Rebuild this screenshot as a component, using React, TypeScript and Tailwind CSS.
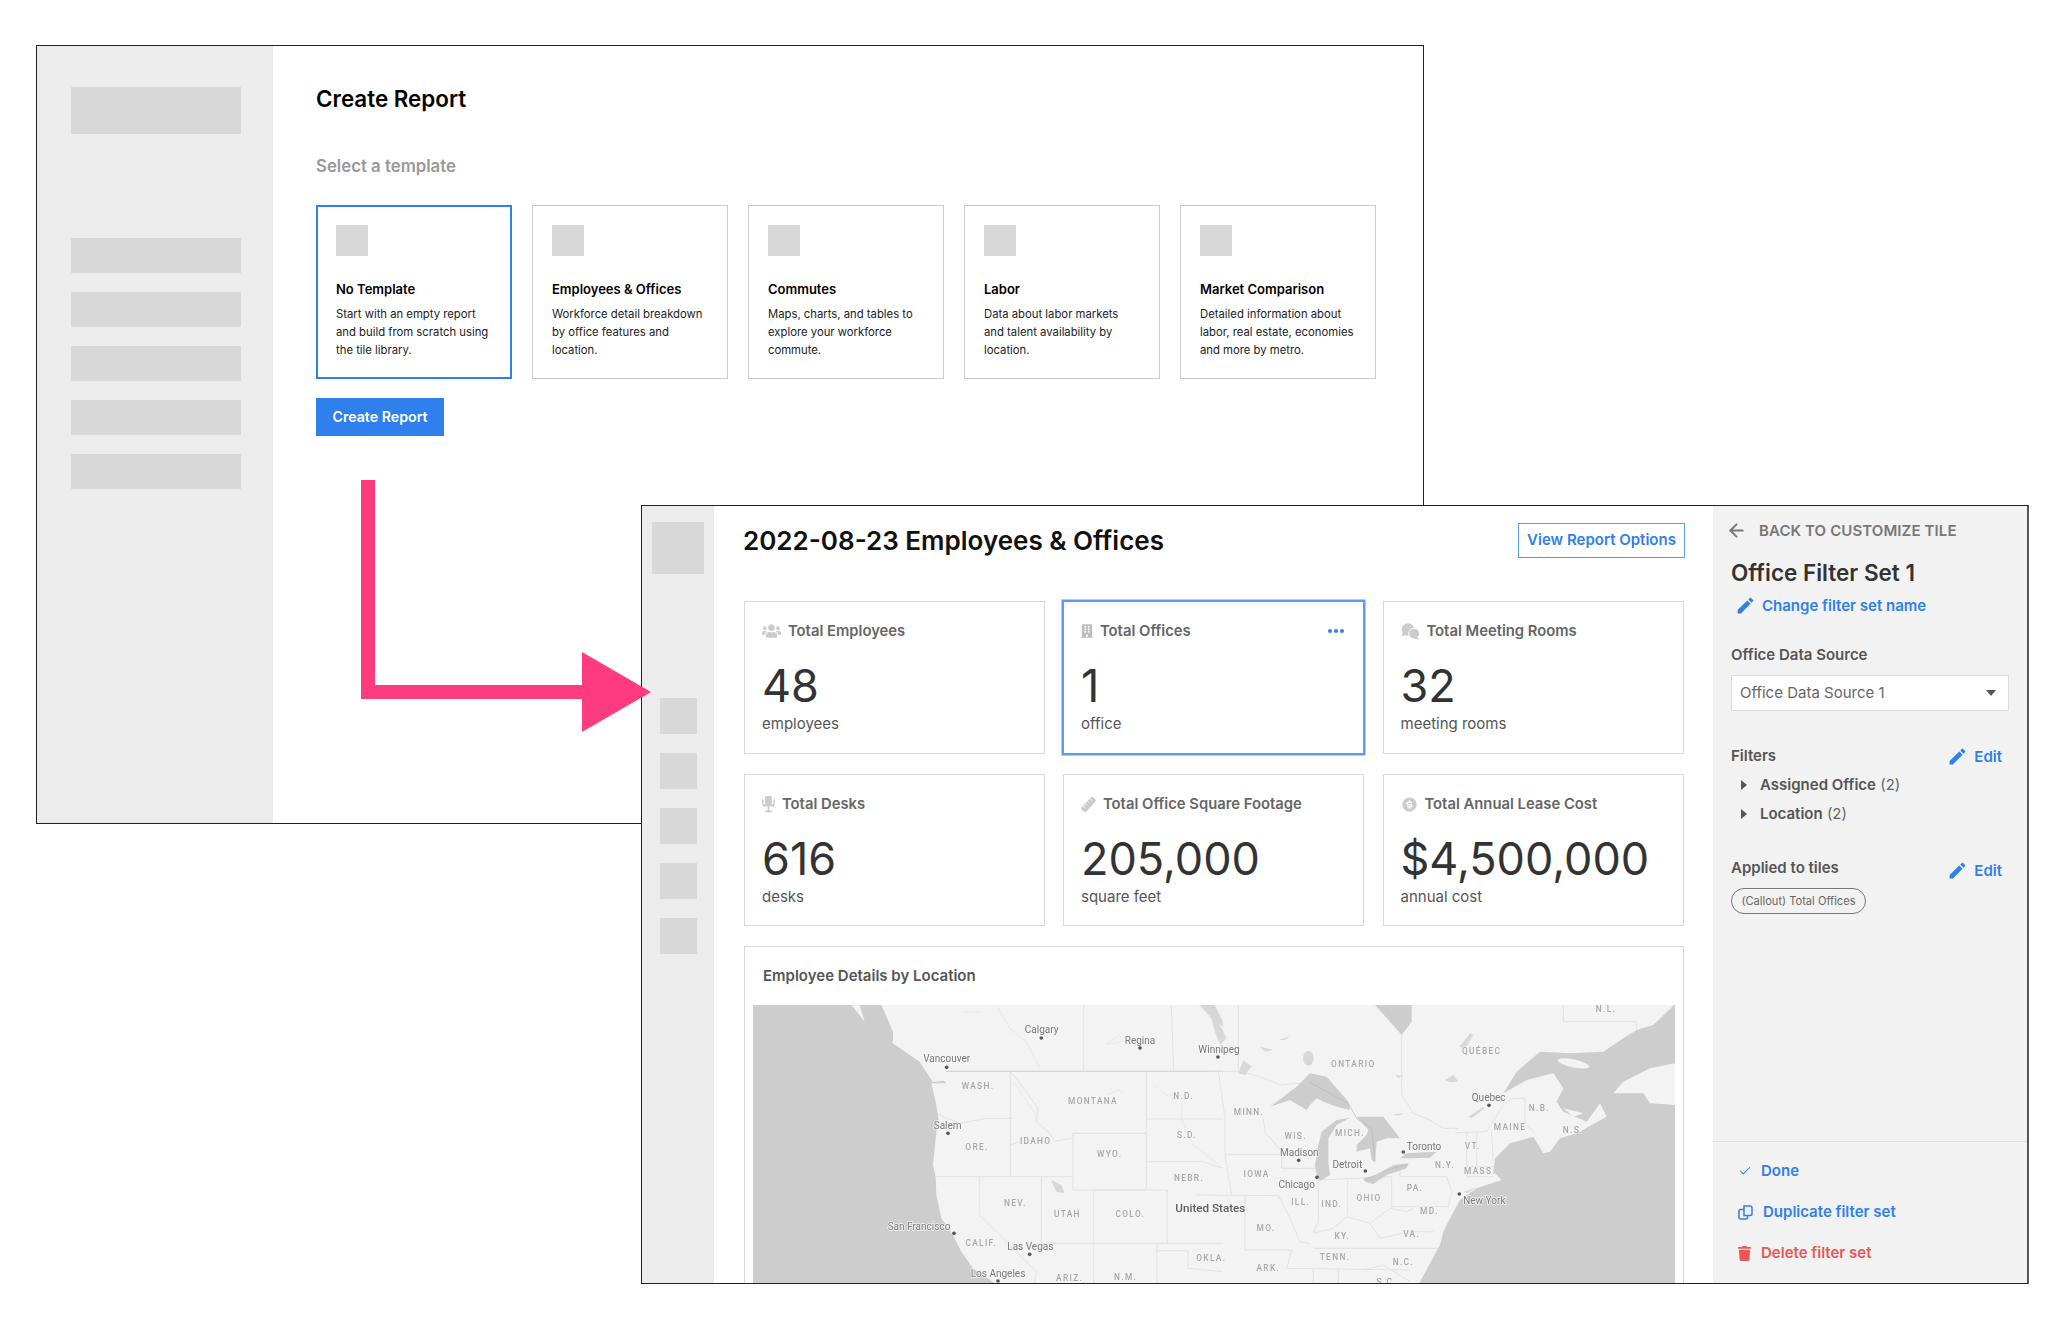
import { ArrowLeft, Check } from "lucide-react";
import { FaBuilding, FaTrash, FaUsers } from "react-icons/fa";
import { MdEdit } from "react-icons/md";
import { RiMoneyDollarCircleFill } from "react-icons/ri";
import type { ReactNode } from "react";

type Template = { title: string; lines: string[]; selected?: boolean };
type Tile = {
  title: string;
  value: string;
  unit: string;
  icon: ReactNode;
  selected?: boolean;
};
type Label = [string, number, number];

const templates: Template[] = [
  {
    title: "No Template",
    lines: ["Start with an empty report", "and build from scratch using", "the tile library."],
    selected: true,
  },
  {
    title: "Employees & Offices",
    lines: ["Workforce detail breakdown", "by office features and", "location."],
  },
  {
    title: "Commutes",
    lines: ["Maps, charts, and tables to", "explore your workforce", "commute."],
  },
  {
    title: "Labor",
    lines: ["Data about labor markets", "and talent availability by", "location."],
  },
  {
    title: "Market Comparison",
    lines: ["Detailed information about", "labor, real estate, economies", "and more by metro."],
  },
];

const DeskChair = () => (
  <svg viewBox="0 0 13 17" className="w-[13px] h-[17px] text-[#cccccc]" fill="currentColor">
    <rect x="3" y="0" width="7" height="8" rx="1.5" />
    <rect x="0" y="3" width="1.6" height="5" rx="0.8" />
    <rect x="11.4" y="3" width="1.6" height="5" rx="0.8" />
    <rect x="0.5" y="8" width="12" height="2.4" rx="1" />
    <rect x="5.6" y="10" width="1.8" height="5" />
    <rect x="3" y="14.6" width="7" height="1.6" rx="0.8" />
  </svg>
);

const RulerIcon = () => (
  <svg viewBox="0 0 16 16" className="w-[15px] h-[15px] text-[#cccccc]">
    <g transform="rotate(-48 8 8)">
      <rect x="-1" y="4.6" width="18" height="6.8" rx="1" fill="currentColor" />
      <path d="M3 4.6 V7.4 M6.5 4.6 V7.4 M10 4.6 V7.4 M13.5 4.6 V7.4" stroke="#ffffff" strokeWidth="0.9" />
    </g>
  </svg>
);

const BubblesIcon = () => (
  <svg viewBox="0 0 19 17" className="w-[19px] h-[17px] text-[#cccccc]" fill="currentColor">
    <circle cx="7" cy="6.5" r="6.2" />
    <path d="M2 9 L0.5 13 L6 12 Z" />
    <circle cx="13.2" cy="10.6" r="5.4" stroke="#ffffff" strokeWidth="1" />
    <path d="M16 14 L18.5 16.8 L12.5 15.8 Z" />
  </svg>
);

const tiles: Tile[] = [
  {
    title: "Total Employees",
    value: "48",
    unit: "employees",
    icon: <FaUsers className="w-[19px] h-[16px] text-[#cccccc]" />,
  },
  {
    title: "Total Offices",
    value: "1",
    unit: "office",
    icon: <FaBuilding className="w-[12px] h-[16px] text-[#bdbdbd]" />,
    selected: true,
  },
  {
    title: "Total Meeting Rooms",
    value: "32",
    unit: "meeting rooms",
    icon: <BubblesIcon />,
  },
  {
    title: "Total Desks",
    value: "616",
    unit: "desks",
    icon: <DeskChair />,
  },
  {
    title: "Total Office Square Footage",
    value: "205,000",
    unit: "square feet",
    icon: <RulerIcon />,
  },
  {
    title: "Total Annual Lease Cost",
    value: "$4,500,000",
    unit: "annual cost",
    icon: <RiMoneyDollarCircleFill className="w-[17px] h-[17px] text-[#cccccc]" />,
  },
];

// map coordinates are three times the page pixels, east half is shifted by 1371
const westLines = [
  "580,199 1410,199",
  "992,0 992,199",
  "1255,0 1262,199",
  "772,199 772,515",
  "555,328 620,355 700,340 780,340",
  "545,515 960,515",
  "772,199 805,240 855,310 850,350 890,385 905,408 960,400",
  "800,410 772,420",
  "960,385 1180,385 1180,555 960,555 960,385",
  "1180,199 1180,385",
  "1180,342 1410,342",
  "1180,470 1350,470 1410,490",
  "1022,555 1243,555 1243,715",
  "1022,555 1022,834",
  "865,515 865,715",
  "680,515 680,630 850,800 845,834",
  "865,715 1410,715",
  "1212,715 1212,834",
  "1212,737 1305,737 1305,790 1410,800",
];
const eastLines = [
  "85,0 85,199 0,199",
  "85,199 150,215 210,240 300,232",
  "25,199 45,340 45,450 65,570",
  "45,448 215,448 215,490 320,490",
  "160,340 165,380 215,440 215,490",
  "-40,570 205,572 240,640 270,710 300,715",
  "105,572 105,735",
  "105,735 245,735 230,790",
  "325,525 325,650 310,685",
  "413,525 413,630",
  "325,525 545,515 545,605",
  "570,490 570,515 710,515 725,560 715,605 545,605",
  "575,90 575,270 610,325 660,345 700,370 745,370",
  "770,385 770,515",
  "735,383 830,380 880,300 905,280 945,280 945,355 970,380",
  "800,385 800,485",
  "845,380 850,470",
  "770,485 850,485",
  "770,515 850,515",
  "1060,0 1060,50 1280,50 1280,80",
  "310,685 370,670 410,635 480,655 540,610 590,620 610,610",
  "480,655 510,700 600,680 670,680",
  "310,730 690,730",
  "230,790 600,795",
  "310,795 310,834",
  "385,795 385,834",
  "460,795 520,780 600,830",
];
const rivers = [
  "1205,240 1240,270 1290,270 1285,340 1320,420 1400,480",
  "1060,118 1100,90 1110,110 1060,118",
  "780,230 850,330 850,350",
  "630,20 680,22",
  "730,0 770,70 820,110 860,190",
  "1060,270 1100,255 1110,265",
];
const cityLabels: Label[] = [
  ["Calgary", 866, 74],
  ["Regina", 1161, 105],
  ["Vancouver", 581, 161],
  ["Salem", 584, 362],
  ["San Francisco", 498, 665],
  ["Las Vegas", 832, 723],
  ["Los Angeles", 735, 804],
  ["Winnipeg", 1398, 132],
  ["Madison", 1639, 443],
  ["Toronto", 2013, 423],
  ["Detroit", 1783, 479],
  ["Chicago", 1631, 539],
  ["Quebec", 2207, 276],
  ["New York", 2194, 586],
];
const cityDots = [
  [865, 99],
  [1161, 129],
  [1395, 156],
  [581, 187],
  [585, 385],
  [603, 685],
  [830, 748],
  [735, 828],
  [1637, 466],
  [1951, 441],
  [1837, 498],
  [1692, 517],
  [2208, 301],
  [2119, 567],
];
const regionLabels: Label[] = [
  ["WASH.", 675, 244],
  ["MONTANA", 1020, 289],
  ["N.D.", 1292, 272],
  ["S.D.", 1302, 389],
  ["ORE.", 672, 425],
  ["IDAHO", 848, 409],
  ["WYO.", 1070, 446],
  ["NEBR.", 1308, 518],
  ["NEV.", 787, 593],
  ["UTAH", 943, 626],
  ["COLO.", 1132, 628],
  ["CALIF.", 685, 713],
  ["ARIZ.", 950, 820],
  ["N.M.", 1118, 816],
  ["OKLA.", 1375, 758],
  ["MINN.", 1488, 322],
  ["WIS.", 1628, 394],
  ["IOWA", 1511, 508],
  ["ILL.", 1643, 590],
  ["IND.", 1736, 598],
  ["OHIO", 1848, 578],
  ["MICH.", 1791, 385],
  ["ONTARIO", 1801, 177],
  ["QUÉBEC", 2186, 137],
  ["N.L.", 2559, 13],
  ["N.B.", 2359, 310],
  ["N.S.", 2461, 375],
  ["MAINE", 2271, 365],
  ["VT.", 2159, 424],
  ["MASS.", 2181, 498],
  ["N.Y.", 2076, 480],
  ["PA.", 1986, 550],
  ["MD.", 2029, 617],
  ["VA.", 1976, 688],
  ["MO.", 1539, 668],
  ["KY.", 1768, 694],
  ["TENN.", 1746, 755],
  ["ARK.", 1546, 789],
  ["N.C.", 1951, 772],
  ["S.C.", 1901, 832],
];

const MapView = () => (
  <svg viewBox="0 0 2766 834" className="block w-[922px] h-[278px] blur-[0.4px]">
    <rect width="2766" height="834" fill="#f3f3f3" />
    <path
      d="M0,0 L385,0 L420,80 L420,112 L500,160 L535,190 L580,235 L535,235 L550,300 L556,340 L548,400 L540,480 L548,515 L550,570 L565,640 L600,690 L625,740 L660,790 L725,834 L0,834 Z"
      fill="#cdcdcd"
    />
    <path d="M295,0 L320,0 L335,50 Z" fill="#f3f3f3" />
    <path d="M415,112 L470,108 L530,165 L585,225 L540,232 L500,170 Z" fill="#f3f3f3" />
    <path d="M895,525 L925,540 L935,565 L910,560 Z" fill="#d6d6d6" />
    <path d="M1340,0 L1385,0 L1410,50 L1410,65 L1375,40 Z" fill="#d6d6d6" />
    <g stroke="#dedede" strokeWidth="2.5" fill="none">
      {westLines.map((points) => (
        <polyline key={points} points={points} />
      ))}
    </g>
    <g stroke="#e4e4e4" strokeWidth="2" fill="none">
      {rivers.map((points) => (
        <polyline key={points} points={points} />
      ))}
    </g>
    <polyline points="580,199 1410,199" stroke="#d2d2d2" strokeWidth="3" fill="none" />
    <g transform="translate(1371 0)">
      <g stroke="#dedede" strokeWidth="2.5" fill="none">
        {eastLines.map((points) => (
          <polyline key={points} points={points} />
        ))}
      </g>
      <g fill="#cdcdcd">
        <path d="M628,834 L690,720 700,680 720,640 750,585 800,550 875,525 850,500 855,460 900,415 970,395 1000,445 1020,440 1050,400 1100,385 1190,335 1170,295 1130,350 1060,320 1040,290 1060,250 1030,205 950,225 880,265 920,200 990,140 1080,145 1180,140 1240,100 1280,75 1330,60 1392,0 1395,0 1395,175 1320,190 1240,230 1210,265 1300,265 1320,295 1395,300 1395,834 Z" />
        <path d="M180,305 L260,245 300,205 350,215 415,290 420,315 380,305 340,290 320,280 300,300 290,315 240,285 Z" />
        <path d="M320,510 L315,480 325,420 335,380 380,345 420,338 380,360 355,400 355,470 360,510 330,527 Z" />
        <path d="M440,335 L520,335 570,400 530,400 500,410 495,470 485,465 480,430 440,440 440,420 470,390 475,375 Z" />
        <path d="M460,520 L500,510 550,480 595,475 590,490 530,510 490,537 465,530 Z" />
        <path d="M570,460 L590,445 680,440 660,458 595,460 Z" />
        <path d="M495,0 L605,0 605,50 575,90 540,50 Z" />
      </g>
      <g fill="#d8d8d8">
        <path d="M0,20 L25,50 50,100 30,120 15,80 Z" />
        <ellipse cx="295" cy="160" rx="16" ry="22" />
        <path d="M748,125 L780,85 790,90 765,130 Z" />
        <path d="M705,225 L730,210 745,230 720,232 Z" />
        <path d="M775,335 L820,305 825,310 785,340 Z" />
        <path d="M85,205 L100,165 125,185 105,210 Z" />
        <path d="M150,125 L190,135 165,140 Z" />
        <path d="M205,105 L240,93 225,105 Z" />
        <path d="M555,210 L585,212 565,218 Z" />
        <path d="M548,328 L582,325 565,332 Z" />
        <path d="M760,560 L805,545 770,565 Z" />
      </g>
      <ellipse cx="1090" cy="175" rx="48" ry="12" fill="#f3f3f3" transform="rotate(12 1090 175)" />
      <path d="M1060,310 L1120,325 1090,335 Z" fill="#f3f3f3" />
      <polyline points="300,232 415,295 440,340 485,370 495,470" stroke="#b5b5b5" strokeWidth="2" fill="none" />
      <polyline points="465,525 530,495 595,478" stroke="#b5b5b5" strokeWidth="2" fill="none" />
    </g>
    <g fontFamily="Roboto, sans-serif" textAnchor="middle" dominantBaseline="central">
      {regionLabels.map(([text, x, y]) => (
        <text
          key={text}
          x={x}
          y={y}
          fontSize="25"
          letterSpacing="4"
          fontWeight="500"
          fill="#a8a8a8"
          stroke="#f3f3f3"
          strokeWidth="3"
          paintOrder="stroke"
        >
          {text}
        </text>
      ))}
      {cityLabels.map(([text, x, y]) => (
        <text
          key={text}
          x={x}
          y={y}
          fontSize="30"
          fill="#787878"
          stroke="#f6f6f6"
          strokeWidth="4"
          paintOrder="stroke"
        >
          {text}
        </text>
      ))}
      <text x={1372} y={610} fontSize="35" fontWeight="500" fill="#5e5e5e">
        United States
      </text>
    </g>
    <g fill="#555555">
      {cityDots.map(([x, y]) => (
        <circle key={`${x}-${y}`} cx={x} cy={y} r="5.5" />
      ))}
    </g>
  </svg>
);

const CreateReportWindow = () => (
  <div className="absolute left-[36px] top-[45px] w-[1388px] h-[779px] flex border border-[#222222] bg-white">
    <aside className="w-[236px] flex flex-col bg-[#ececec] pl-[34px] pt-[41px]">
      <div className="w-[170px] h-[47px] bg-[#d8d8d8]" />
      <div className="mt-[104px] flex flex-col gap-[19px]">
        {[1, 2, 3, 4, 5].map((row) => (
          <div key={row} className="w-[170px] h-[35px] bg-[#d8d8d8]" />
        ))}
      </div>
    </aside>
    <main className="flex-1 pl-[43px] pt-[38px]">
      <h1 className="text-[22.4px] leading-[30px] font-semibold text-black">Create Report</h1>
      <h2 className="mt-[40px] text-[16.8px] leading-[24px] font-semibold text-[#999999]">
        Select a template
      </h2>
      <div className="mt-[27px] flex gap-[20px]">
        {templates.map((template) => (
          <div
            key={template.title}
            className={
              template.selected
                ? "w-[196px] h-[174px] border-2 border-[#2f80ed] pl-[18px] pt-[18px]"
                : "w-[196px] h-[174px] border border-[#cccccc] pl-[19px] pt-[19px]"
            }
          >
            <div className="w-[32px] h-[31px] bg-[#d8d8d8]" />
            <div className="mt-[23px] text-[13px] leading-[20px] font-semibold text-black">
              {template.title}
            </div>
            <div className="mt-[6px] text-[11.3px] leading-[18px] text-[#222222]">
              {template.lines.map((line) => (
                <div key={line}>{line}</div>
              ))}
            </div>
          </div>
        ))}
      </div>
      <button className="mt-[19px] w-[128px] h-[38px] bg-[#2f80ed] text-[14.2px] font-semibold text-white">
        Create Report
      </button>
    </main>
  </div>
);

const TileCard = ({ tile }: { tile: Tile }) => (
  <div
    className={
      tile.selected
        ? "border border-[#5b9bf0] ring-[1.5px] ring-[#5b9bf0] pl-[17px] pt-[19px]"
        : "border border-[#d8d8d8] pl-[17px] pt-[19px]"
    }
  >
    <div className="flex items-center justify-between pr-[19px] h-[20px]">
      <div className="flex items-center gap-[7px] text-[14.8px] font-semibold text-[#666666]">
        {tile.icon}
        <span>{tile.title}</span>
      </div>
      {tile.selected && (
        <div className="flex gap-[2px]">
          <span className="w-[4px] h-[4px] rounded-full bg-[#2f80ed]" />
          <span className="w-[4px] h-[4px] rounded-full bg-[#2f80ed]" />
          <span className="w-[4px] h-[4px] rounded-full bg-[#2f80ed]" />
        </div>
      )}
    </div>
    <div className="mt-[17px] text-[45px] leading-[56px] text-[#333333]">{tile.value}</div>
    <div className="text-[15px] leading-[20px] text-[#555555]">{tile.unit}</div>
  </div>
);

const EditLink = () => (
  <div className="flex items-center gap-[6px] text-[15px] leading-[20px] font-semibold text-[#2f80ed]">
    <MdEdit className="w-[21px] h-[21px]" />
    Edit
  </div>
);

const Caret = () => (
  <svg viewBox="0 0 6 10" className="w-[6px] h-[10px] text-[#555555]" fill="currentColor">
    <path d="M0 0 L6 5 L0 10 Z" />
  </svg>
);

const CopyIcon = () => (
  <svg
    viewBox="0 0 15 15"
    className="w-[15px] h-[15px] text-[#2f80ed]"
    fill="none"
    stroke="currentColor"
    strokeWidth="1.5"
  >
    <path d="M6 1 H12 Q14 1 14 3 V9 Q14 10.5 12 10.5 H6 Z" />
    <path d="M6 4.5 H2.5 Q1 4.5 1 6 V13 Q1 14 2.5 14 H8 Q9.5 14 9.5 13 V10.5" />
  </svg>
);

const FilterPanel = () => (
  <aside className="w-[314px] flex flex-col bg-[#f2f2f2]">
    <div className="pl-[13px] pt-[14px] flex items-center gap-[12px] text-[15px] leading-[20px] font-semibold tracking-[0.1px] text-[#777777]">
      <ArrowLeft className="w-[21px] h-[21px]" strokeWidth={2.25} />
      BACK TO CUSTOMIZE TILE
    </div>
    <div className="pl-[18px] pr-[25px]">
      <h2 className="mt-[18px] text-[22.5px] leading-[28px] font-semibold text-[#333333]">
        Office Filter Set 1
      </h2>
      <div className="mt-[8px] ml-[4px] flex items-center gap-[6px] text-[15px] leading-[20px] font-semibold text-[#2f80ed]">
        <MdEdit className="w-[21px] h-[21px]" />
        Change filter set name
      </div>
      <div className="mt-[29px] text-[15px] leading-[20px] font-semibold text-[#555555]">
        Office Data Source
      </div>
      <div className="mt-[10px] w-[278px] h-[36px] flex items-center justify-between bg-white border border-[#dddddd] pl-[8px] pr-[12px] text-[15px] text-[#666666]">
        Office Data Source 1
        <svg viewBox="0 0 10 6" className="w-[10px] h-[6px] text-[#555555]" fill="currentColor">
          <path d="M0 0 H10 L5 6 Z" />
        </svg>
      </div>
      <div className="mt-[35px] flex items-start justify-between">
        <div className="text-[15px] leading-[20px] font-semibold text-[#555555]">Filters</div>
        <EditLink />
      </div>
      <div className="mt-[8px] ml-[10px] flex items-center gap-[13px] text-[15px] leading-[20px] text-[#666666]">
        <Caret />
        <span>
          <span className="font-semibold text-[#555555]">Assigned Office</span> (2)
        </span>
      </div>
      <div className="mt-[9px] ml-[10px] flex items-center gap-[13px] text-[15px] leading-[20px] text-[#666666]">
        <Caret />
        <span>
          <span className="font-semibold text-[#555555]">Location</span> (2)
        </span>
      </div>
      <div className="mt-[34px] flex items-start justify-between">
        <div className="text-[15px] leading-[20px] font-semibold text-[#555555]">
          Applied to tiles
        </div>
        <div className="mt-[2px]">
          <EditLink />
        </div>
      </div>
      <div className="mt-[7px] w-[135px] h-[26px] flex items-center justify-center rounded-full border-[1.5px] border-[#777777] text-[11.1px] text-[#666666]">
        (Callout) Total Offices
      </div>
    </div>
    <div className="mt-auto border-t border-[#e0e0e0] pl-[25px] pt-[19px] pb-[20px] flex flex-col gap-[21px] text-[15px] leading-[20px] font-semibold">
      <div className="flex items-center gap-[9px] text-[#2f80ed]">
        <Check className="w-[14px] h-[14px]" strokeWidth={1.75} />
        Done
      </div>
      <div className="flex items-center gap-[10px] text-[#2f80ed]">
        <CopyIcon />
        Duplicate filter set
      </div>
      <div className="flex items-center gap-[10px] text-[#eb5757]">
        <FaTrash className="w-[13px] h-[15px]" />
        Delete filter set
      </div>
    </div>
  </aside>
);

const ReportWindow = () => (
  <div className="absolute left-[641px] top-[505px] w-[1388px] h-[779px] flex border border-[#222222] border-r-2 border-r-[#555555] bg-white overflow-hidden">
    <aside className="w-[72px] flex flex-col items-center bg-[#ececec] pt-[16px]">
      <div className="w-[52px] h-[52px] bg-[#d8d8d8]" />
      <div className="mt-[124px] flex flex-col gap-[19px]">
        {[1, 2, 3, 4, 5].map((row) => (
          <div key={row} className="w-[37px] h-[36px] bg-[#d8d8d8]" />
        ))}
      </div>
    </aside>
    <main className="w-[999px] flex flex-col pl-[30px] pt-[17px] overflow-hidden">
      <div className="w-[941px] h-[35px] flex items-center justify-between">
        <h1 className="-ml-[1px] text-[26px] font-semibold text-[#111111]">
          2022-08-23 Employees &amp; Offices
        </h1>
        <button className="w-[167px] h-[35px] border border-[#5b9bf0] text-[15px] font-semibold text-[#2f80ed]">
          View Report Options
        </button>
      </div>
      <div className="mt-[43px] w-[940px] grid grid-cols-[300.5px_301px_301.5px] grid-rows-[153px_152px] gap-x-[18.5px] gap-y-[20px]">
        {tiles.map((tile) => (
          <TileCard key={tile.title} tile={tile} />
        ))}
      </div>
      <div className="mt-[20px] w-[940px] flex-1 border border-b-0 border-[#d8d8d8] pl-[8px] pt-[19px]">
        <div className="pl-[10px] text-[15px] leading-[20px] font-semibold text-[#555555]">
          Employee Details by Location
        </div>
        <div className="mt-[19px]">
          <MapView />
        </div>
      </div>
    </main>
    <FilterPanel />
  </div>
);

const FlowArrow = () => (
  <svg viewBox="0 0 292 253" className="absolute left-[360px] top-[480px] w-[292px] h-[253px]">
    <polygon points="1,0 15,0 15,205 222,205 222,172 291,212 222,252 222,219 1,219" fill="#ff3b7f" />
  </svg>
);

export default function App() {
  return (
    <div className="relative w-[2064px] h-[1318px] bg-white overflow-hidden font-[Inter,sans-serif]">
      <CreateReportWindow />
      <ReportWindow />
      <FlowArrow />
    </div>
  );
}
